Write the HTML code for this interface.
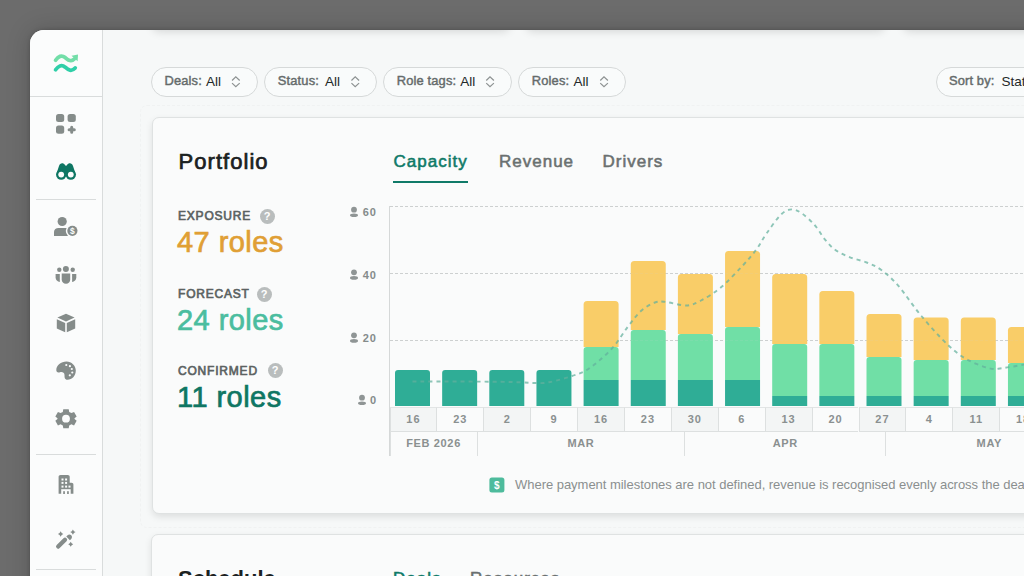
<!DOCTYPE html>
<html><head><meta charset="utf-8">
<style>
*{box-sizing:border-box;margin:0;padding:0}
html,body{width:1024px;height:576px;overflow:hidden;background:#6c6c6c;font-family:"Liberation Sans",sans-serif}
.abs{position:absolute}
#win{position:absolute;left:30px;top:30px;width:1100px;height:600px;background:#f6f8f8;border-top-left-radius:14px;overflow:hidden;box-shadow:0 0 4px rgba(0,0,0,.2),0 0 24px rgba(0,0,0,.18)}
#side{position:absolute;left:0;top:0;width:73px;height:600px;background:#fbfcfc;border-right:1px solid #d9dcdc}
.pill{position:absolute;top:67px;height:30px;border:1px solid #d6d9d9;border-radius:15px;background:#f9fbfb}
.pl{position:absolute;top:73px;font-size:12.9px;-webkit-text-stroke:0.45px currentColor;color:#656b6b;letter-spacing:0.15px;white-space:nowrap;line-height:16px}
.pv{position:absolute;top:73.5px;font-size:13.5px;color:#232828;white-space:nowrap;line-height:16px}
.card{position:absolute;background:#fafbfb;border:1px solid #dfe2e2;border-radius:7px;box-shadow:0 3px 7px rgba(0,0,0,.1)}
.wk{position:absolute;top:407px;width:46.9px;height:25px;border-left:1px solid #dde0e0;border-top:1px solid #e2e5e5;border-bottom:1px solid #dde0e0;font-size:11px;font-weight:bold;color:#8a9090;text-align:center;line-height:22.5px;letter-spacing:1px}
.mo{position:absolute;top:432px;height:24px;border-left:1px solid #dde0e0;font-size:11px;font-weight:bold;color:#8a9090;text-align:center;line-height:22px;letter-spacing:0.65px}
.lab{position:absolute;left:178px;font-size:12px;-webkit-text-stroke:0.65px currentColor;letter-spacing:0.8px;color:#5b6262;line-height:14px}
.val{position:absolute;left:177px;font-size:29px;letter-spacing:0.45px;-webkit-text-stroke:0.7px currentColor;line-height:34px}
.q{position:absolute;width:15px;height:15px;border-radius:50%;background:#b9bdbd;color:#fff;font-size:11px;font-weight:bold;text-align:center;line-height:15px}
.yl{position:absolute;font-size:11px;font-weight:bold;color:#858b8b;letter-spacing:1px;text-align:right}
.tab{position:absolute;top:151.5px;font-size:17px;font-weight:normal;-webkit-text-stroke:0.55px currentColor;letter-spacing:1px;color:#6a7070;line-height:20px}
</style></head><body>
<div id="win">
 <div id="side">
  <div class="abs" style="left:0;top:66px;width:73px;height:1px;background:#d9dcdc"></div>
  <div class="abs" style="left:6px;top:169px;width:60px;height:1px;background:#d9dcdc"></div>
  <div class="abs" style="left:6px;top:424px;width:60px;height:1px;background:#d9dcdc"></div>
  <div class="abs" style="left:6px;top:539px;width:60px;height:1px;background:#d9dcdc"></div>
 </div>
</div>
<svg class="abs" style="left:0;top:0" width="1024" height="576" viewBox="0 0 1024 576">
 <path d="M55.6 60.2 C58.2 56.4, 61.5 54.6, 65.2 57.6 C68.4 60.6, 71.2 62.2, 74.3 59" fill="none" stroke="#72dea8" stroke-width="3.8" stroke-linecap="round"/>
 <path d="M71.5 55.8 L78 54.5 L77.6 61.2 Z" fill="#72dea8"/>
 <path d="M55.6 69.8 C58.2 66, 61.5 64.2, 65.2 67.2 C68.4 70.2, 71.5 72, 75.2 68" fill="none" stroke="#2fcfa8" stroke-width="3.8" stroke-linecap="round"/>
 <rect x="56" y="114" width="8.2" height="8" rx="2.5" fill="#858c8a"/>
 <rect x="67.6" y="114" width="8.2" height="8" rx="2.5" fill="#858c8a"/>
 <rect x="56" y="125.6" width="8.2" height="8.2" rx="2.5" fill="#858c8a"/>
 <path d="M71.7 127.2 V132.3 M69.1 129.7 H74.3" stroke="#858c8a" stroke-width="3" stroke-linecap="round"/>
 <path d="M57 172 L59 166 C60 162.5, 63.5 162.5, 65 165 L66 166 L67 165 C68.5 162.5, 72 162.5, 73 166 L75 172 Z" fill="#0e7663"/>
 <circle cx="61.2" cy="174.6" r="5.2" fill="#0e7663"/>
 <circle cx="70.8" cy="174.6" r="5.2" fill="#0e7663"/>
 <rect x="63" y="168" width="6" height="7" fill="#0e7663"/>
 <circle cx="61.2" cy="174.6" r="2.9" fill="#fbfcfc"/>
 <circle cx="70.8" cy="174.6" r="2.9" fill="#fbfcfc"/>
 <circle cx="62.2" cy="221.5" r="4.6" fill="#858c8a"/>
 <path d="M54 236 V232 C54 229.5, 56 228, 58.5 228 H67.5 L68 236 Z" fill="#858c8a"/>
 <circle cx="72.4" cy="230.8" r="6.6" fill="#fbfcfc"/>
 <circle cx="72.4" cy="230.8" r="5.1" fill="#858c8a"/>
 <text x="72.4" y="234.3" font-size="8.5" font-weight="bold" fill="#fbfcfc" text-anchor="middle" font-family="Liberation Sans">$</text>
 <circle cx="65.9" cy="269" r="3" fill="#858c8a"/>
 <circle cx="59.3" cy="269.8" r="2.2" fill="#858c8a"/>
 <circle cx="72.7" cy="269.8" r="2.2" fill="#858c8a"/>
 <path d="M61.7 273.4 H70.2 V279.5 C70.2 282, 68.5 283.7, 66 283.7 C63.5 283.7, 61.7 282, 61.7 279.5 Z" fill="#858c8a"/>
 <path d="M55.6 274 H59.8 V282 C57.5 281.5, 55.6 280, 55.6 277.5 Z" fill="#858c8a"/>
 <path d="M76.3 274 H72.1 V282 C74.4 281.5, 76.3 280, 76.3 277.5 Z" fill="#858c8a"/>
 <path d="M66 313.8 L74.6 317.6 L66 321.4 L57.4 317.6 Z" fill="#858c8a"/>
 <path d="M56.8 319.3 L65.2 323 V332.2 L56.8 328.4 Z" fill="#858c8a"/>
 <path d="M75.2 319.3 L66.8 323 V332.2 L75.2 328.4 Z" fill="#858c8a"/>
 <path d="M66.5 361.4 C71.5 361.4, 75.8 365.5, 75.8 370.5 C75.8 376, 72 379.8, 67.5 379.8 C64.5 379.8, 64.5 377, 64.5 375 C64.5 372.5, 62 371.7, 60 372.3 C57.5 373, 56.3 372, 56.3 370 C56.3 365, 61 361.4, 66.5 361.4 Z" fill="#858c8a"/>
 <circle cx="66.3" cy="365" r="1.1" fill="#fbfcfc"/>
 <circle cx="69.9" cy="366.2" r="1.1" fill="#fbfcfc"/>
 <circle cx="71.8" cy="369" r="1.1" fill="#fbfcfc"/>
 <circle cx="72.3" cy="372.5" r="1.1" fill="#fbfcfc"/>
 <circle cx="69.8" cy="375.3" r="1.1" fill="#fbfcfc"/>
 <g transform="translate(66 418.7)">
  <path d="M-2.8 -9.8 H2.8 L3.3 -7 L5.6 -5.8 L8.3 -6.9 L11 -2.2 L8.8 -0.4 V0.4 L11 2.2 L8.3 6.9 L5.6 5.8 L3.3 7 L2.8 9.8 H-2.8 L-3.3 7 L-5.6 5.8 L-8.3 6.9 L-11 2.2 L-8.8 0.4 V-0.4 L-11 -2.2 L-8.3 -6.9 L-5.6 -5.8 L-3.3 -7 Z" fill="#858c8a" transform="scale(0.97)"/>
  <circle r="3.9" fill="#fbfcfc"/>
 </g>
 <path d="M58.6 477 C58.6 475.8, 59.4 475.1, 60.6 475.1 H67.7 C68.9 475.1, 69.7 475.8, 69.7 477 V482.7 H71.5 C72.7 482.7, 73.4 483.4, 73.4 484.6 V493.8 H58.6 Z" fill="#858c8a"/>
 <g fill="#fbfcfc">
  <rect x="61.5" y="478.5" width="2" height="2"/><rect x="65.1" y="478.5" width="2" height="2"/>
  <rect x="61.5" y="481.9" width="2" height="2"/><rect x="65.1" y="481.9" width="2" height="2"/>
  <rect x="61.5" y="485.6" width="2" height="2"/><rect x="65.1" y="485.6" width="2" height="2"/><rect x="68.5" y="485.6" width="2" height="2"/>
  <rect x="61.2" y="489.2" width="9.5" height="4.8"/>
 </g>
 <rect x="63.2" y="491.2" width="1.7" height="2.8" fill="#858c8a"/><rect x="67.1" y="491.2" width="1.7" height="2.8" fill="#858c8a"/>
 <path d="M58.2 546.6 L65 539.8" stroke="#858c8a" stroke-width="4.3" stroke-linecap="round"/>
 <path d="M66.3 536.6 L67.6 535.3 C68.6 534.3, 70.2 534.3, 71.2 535.3 C72.2 536.3, 72.2 537.9, 71.2 538.9 L69.9 540.2 Z" fill="#858c8a"/>
 <path d="M60.65 531.3 Q61.406 533.244 63.35 534 Q61.406 534.756 60.65 536.7 Q59.894 534.756 57.949999999999996 534 Q59.894 533.244 60.65 531.3 Z" fill="#858c8a"/>
 <path d="M72.9 529.4 Q73.656 531.344 75.60000000000001 532.1 Q73.656 532.856 72.9 534.8000000000001 Q72.144 532.856 70.2 532.1 Q72.144 531.344 72.9 529.4 Z" fill="#858c8a"/>
 <path d="M70.7 541.7 Q71.4 543.5 73.2 544.2 Q71.4 544.9000000000001 70.7 546.7 Q70.0 544.9000000000001 68.2 544.2 Q70.0 543.5 70.7 541.7 Z" fill="#858c8a"/>
</svg>

<div class="pill" style="left:151px;width:106.5px"></div><div class="pl" style="left:164.5px">Deals:</div><div class="pv" style="left:206px">All</div>
<div class="pill" style="left:264px;width:112.5px"></div><div class="pl" style="left:277.8px">Status:</div><div class="pv" style="left:325px">All</div>
<div class="pill" style="left:383px;width:128.5px"></div><div class="pl" style="left:396.7px">Role tags:</div><div class="pv" style="left:460.3px">All</div>
<div class="pill" style="left:518px;width:107.5px"></div><div class="pl" style="left:531.8px">Roles:</div><div class="pv" style="left:573.6px">All</div>
<div class="pill" style="left:935.5px;width:200px"></div><div class="pl" style="left:948.9px">Sort by:</div><div class="pv" style="left:1001.5px">Status</div>
<svg class="abs" style="left:0;top:0" width="1024" height="110" viewBox="0 0 1024 110">
<path d="M232.05 80.5 L235.80 76.9 L239.70 80.5 M232.05 83.1 L235.80 86.7 L239.70 83.1" fill="none" stroke="#8d9292" stroke-width="1.2"/>
<path d="M351.45 80.5 L355.20 76.9 L359.10 80.5 M351.45 83.1 L355.20 86.7 L359.10 83.1" fill="none" stroke="#8d9292" stroke-width="1.2"/>
<path d="M486.25 80.5 L490.00 76.9 L493.90 80.5 M486.25 83.1 L490.00 86.7 L493.90 83.1" fill="none" stroke="#8d9292" stroke-width="1.2"/>
<path d="M600.25 80.5 L604.00 76.9 L607.90 80.5 M600.25 83.1 L604.00 86.7 L607.90 83.1" fill="none" stroke="#8d9292" stroke-width="1.2"/>
</svg>

<div class="abs" style="left:139.5px;top:104.5px;width:1000px;height:423px;border:1px dashed #f0f2f2;border-radius:7px"></div>
<div class="abs" style="left:103px;top:30px;width:921px;height:30px;overflow:hidden">
<div class="card" style="left:49px;top:-70px;width:358px;height:70px;box-shadow:0 2px 8px rgba(0,0,0,.13)"></div>
<div class="card" style="left:423px;top:-70px;width:359px;height:70px;box-shadow:0 2px 8px rgba(0,0,0,.13)"></div>
<div class="card" style="left:800px;top:-70px;width:359px;height:70px;box-shadow:0 2px 8px rgba(0,0,0,.13)"></div>
</div>
<div class="card" style="left:152px;top:117px;width:1000px;height:397px"></div>
<div class="abs" style="left:178.5px;top:150px;font-size:22px;-webkit-text-stroke:0.7px currentColor;color:#1b2121;letter-spacing:1.05px;line-height:24px">Portfolio</div>
<div class="tab" style="left:393.5px;color:#0f7a68">Capacity</div>
<div class="abs" style="left:393px;top:181px;width:75px;height:2px;background:#0f7a68"></div>
<div class="tab" style="left:499px">Revenue</div>
<div class="tab" style="left:602.5px">Drivers</div>

<div class="lab" style="top:209px">EXPOSURE</div><div class="q" style="left:259.7px;top:208.5px">?</div>
<div class="val" style="top:224.5px;color:#e09f35">47 roles</div>
<div class="lab" style="top:287px">FORECAST</div><div class="q" style="left:256.5px;top:286.7px">?</div>
<div class="val" style="top:303px;color:#4bbd9f">24 roles</div>
<div class="lab" style="top:364px">CONFIRMED</div><div class="q" style="left:267.7px;top:363.4px">?</div>
<div class="val" style="top:379.5px;color:#0f7663">11 roles</div>

<div class="yl" style="left:360px;top:206.2px;width:17px">60</div>
<div class="yl" style="left:360px;top:269px;width:17px">40</div>
<div class="yl" style="left:360px;top:332.2px;width:17px">20</div>
<div class="yl" style="left:360px;top:394px;width:17px">0</div>

<div class="wk" style="left:389.5px;background:#f3f5f5">16</div>
<div class="wk" style="left:436.4px;background:#fafbfb">23</div>
<div class="wk" style="left:483.3px;background:#f3f5f5">2</div>
<div class="wk" style="left:530.2px;background:#fafbfb">9</div>
<div class="wk" style="left:577.1px;background:#f3f5f5">16</div>
<div class="wk" style="left:624.0px;background:#fafbfb">23</div>
<div class="wk" style="left:670.9px;background:#f3f5f5">30</div>
<div class="wk" style="left:717.8px;background:#fafbfb">6</div>
<div class="wk" style="left:764.7px;background:#f3f5f5">13</div>
<div class="wk" style="left:811.6px;background:#fafbfb">20</div>
<div class="wk" style="left:858.5px;background:#f3f5f5">27</div>
<div class="wk" style="left:905.4px;background:#fafbfb">4</div>
<div class="wk" style="left:952.3px;background:#f3f5f5">11</div>
<div class="wk" style="left:999.2px;background:#fafbfb">18</div>
<div class="mo" style="left:389.5px;width:87.1px">FEB 2026</div>
<div class="mo" style="left:476.6px;width:207.7px">MAR</div>
<div class="mo" style="left:684.3px;width:201.0px">APR</div>
<div class="mo" style="left:885.3px;width:207.0px">MAY</div>

<svg class="abs" style="left:0;top:0" width="1024" height="576" viewBox="0 0 1024 576">
 <line x1="389.5" y1="206" x2="389.5" y2="456" stroke="#d5d8d8" stroke-width="1"/>
 <line x1="390" y1="206.5" x2="1024" y2="206.5" stroke="#cdd0d0" stroke-width="1" stroke-dasharray="3 2"/>
<line x1="390" y1="273.5" x2="1024" y2="273.5" stroke="#cdd0d0" stroke-width="1" stroke-dasharray="3 2"/>
<line x1="390" y1="340.5" x2="1024" y2="340.5" stroke="#cdd0d0" stroke-width="1" stroke-dasharray="3 2"/>
 <g><path d="M395.00 406 V373.00 Q395.00 370.00 398.00 370.00 H427.00 Q430.00 370.00 430.00 373.00 V406 Z" fill="#2fad96"/>
<path d="M442.15 406 V373.00 Q442.15 370.00 445.15 370.00 H474.15 Q477.15 370.00 477.15 373.00 V406 Z" fill="#2fad96"/>
<path d="M489.30 406 V373.00 Q489.30 370.00 492.30 370.00 H521.30 Q524.30 370.00 524.30 373.00 V406 Z" fill="#2fad96"/>
<path d="M536.45 406 V373.00 Q536.45 370.00 539.45 370.00 H568.45 Q571.45 370.00 571.45 373.00 V406 Z" fill="#2fad96"/>
<path d="M583.60 347 V304.50 Q583.60 301.00 587.10 301.00 H615.10 Q618.60 301.00 618.60 304.50 V347 Z" fill="#f9cd68"/>
<path d="M583.60 380 V350.00 Q583.60 347.00 586.60 347.00 H615.60 Q618.60 347.00 618.60 350.00 V380 Z" fill="#70dfa6"/>
<rect x="583.60" y="380" width="35" height="26.00" fill="#2fad96"/>
<path d="M630.75 330 V264.50 Q630.75 261.00 634.25 261.00 H662.25 Q665.75 261.00 665.75 264.50 V330 Z" fill="#f9cd68"/>
<path d="M630.75 380 V333.00 Q630.75 330.00 633.75 330.00 H662.75 Q665.75 330.00 665.75 333.00 V380 Z" fill="#70dfa6"/>
<rect x="630.75" y="380" width="35" height="26.00" fill="#2fad96"/>
<path d="M677.90 334 V277.50 Q677.90 274.00 681.40 274.00 H709.40 Q712.90 274.00 712.90 277.50 V334 Z" fill="#f9cd68"/>
<path d="M677.90 380 V337.00 Q677.90 334.00 680.90 334.00 H709.90 Q712.90 334.00 712.90 337.00 V380 Z" fill="#70dfa6"/>
<rect x="677.90" y="380" width="35" height="26.00" fill="#2fad96"/>
<path d="M725.05 327 V254.50 Q725.05 251.00 728.55 251.00 H756.55 Q760.05 251.00 760.05 254.50 V327 Z" fill="#f9cd68"/>
<path d="M725.05 380 V330.00 Q725.05 327.00 728.05 327.00 H757.05 Q760.05 327.00 760.05 330.00 V380 Z" fill="#70dfa6"/>
<rect x="725.05" y="380" width="35" height="26.00" fill="#2fad96"/>
<path d="M772.20 344 V277.50 Q772.20 274.00 775.70 274.00 H803.70 Q807.20 274.00 807.20 277.50 V344 Z" fill="#f9cd68"/>
<path d="M772.20 396 V347.00 Q772.20 344.00 775.20 344.00 H804.20 Q807.20 344.00 807.20 347.00 V396 Z" fill="#70dfa6"/>
<rect x="772.20" y="396" width="35" height="10.00" fill="#2fad96"/>
<path d="M819.35 344 V294.50 Q819.35 291.00 822.85 291.00 H850.85 Q854.35 291.00 854.35 294.50 V344 Z" fill="#f9cd68"/>
<path d="M819.35 396 V347.00 Q819.35 344.00 822.35 344.00 H851.35 Q854.35 344.00 854.35 347.00 V396 Z" fill="#70dfa6"/>
<rect x="819.35" y="396" width="35" height="10.00" fill="#2fad96"/>
<path d="M866.50 357 V317.50 Q866.50 314.00 870.00 314.00 H898.00 Q901.50 314.00 901.50 317.50 V357 Z" fill="#f9cd68"/>
<path d="M866.50 396 V360.00 Q866.50 357.00 869.50 357.00 H898.50 Q901.50 357.00 901.50 360.00 V396 Z" fill="#70dfa6"/>
<rect x="866.50" y="396" width="35" height="10.00" fill="#2fad96"/>
<path d="M913.65 360 V321.00 Q913.65 317.50 917.15 317.50 H945.15 Q948.65 317.50 948.65 321.00 V360 Z" fill="#f9cd68"/>
<path d="M913.65 396 V363.00 Q913.65 360.00 916.65 360.00 H945.65 Q948.65 360.00 948.65 363.00 V396 Z" fill="#70dfa6"/>
<rect x="913.65" y="396" width="35" height="10.00" fill="#2fad96"/>
<path d="M960.80 360 V321.00 Q960.80 317.50 964.30 317.50 H992.30 Q995.80 317.50 995.80 321.00 V360 Z" fill="#f9cd68"/>
<path d="M960.80 396 V363.00 Q960.80 360.00 963.80 360.00 H992.80 Q995.80 360.00 995.80 363.00 V396 Z" fill="#70dfa6"/>
<rect x="960.80" y="396" width="35" height="10.00" fill="#2fad96"/>
<path d="M1007.95 363 V330.50 Q1007.95 327.00 1011.45 327.00 H1039.45 Q1042.95 327.00 1042.95 330.50 V363 Z" fill="#f9cd68"/>
<path d="M1007.95 396 V366.00 Q1007.95 363.00 1010.95 363.00 H1039.95 Q1042.95 363.00 1042.95 366.00 V396 Z" fill="#70dfa6"/>
<rect x="1007.95" y="396" width="35" height="10.00" fill="#2fad96"/></g>
 <g opacity="0.12"><line x1="390" y1="206.5" x2="1024" y2="206.5" stroke="#cdd0d0" stroke-width="1" stroke-dasharray="3 2"/>
<line x1="390" y1="273.5" x2="1024" y2="273.5" stroke="#cdd0d0" stroke-width="1" stroke-dasharray="3 2"/>
<line x1="390" y1="340.5" x2="1024" y2="340.5" stroke="#cdd0d0" stroke-width="1" stroke-dasharray="3 2"/></g>
 <path d="M412.5 381.5 C420.4 381.5, 445.4 381.4, 460.0 381.5 C474.6 381.6, 490.0 381.7, 500.0 381.8 C510.0 381.9, 514.2 382.1, 520.0 382.3 C525.8 382.5, 529.8 383.0, 534.6 383.0 C539.4 383.0, 542.8 383.5, 549.0 382.3 C555.2 381.1, 565.3 378.3, 572.0 376.0 C578.7 373.7, 582.4 373.0, 589.0 368.5 C595.6 364.0, 605.2 355.8, 611.7 348.8 C618.2 341.8, 623.1 332.8, 628.0 326.5 C632.9 320.2, 636.5 315.0, 641.0 311.0 C645.5 307.0, 650.8 304.0, 655.0 302.5 C659.2 301.0, 660.7 301.5, 666.0 302.0 C671.3 302.5, 680.9 305.8, 686.7 305.5 C692.5 305.2, 695.3 303.5, 701.0 300.5 C706.7 297.5, 714.0 293.1, 720.8 287.5 C727.6 281.9, 735.8 272.9, 741.7 266.7 C747.6 260.4, 751.8 255.6, 756.0 250.0 C760.2 244.4, 762.5 239.2, 766.7 233.3 C770.9 227.4, 776.8 218.6, 781.0 214.6 C785.2 210.6, 788.2 209.6, 791.7 209.4 C795.2 209.2, 798.2 210.9, 802.0 213.5 C805.8 216.1, 810.8 220.7, 814.6 225.0 C818.4 229.3, 821.5 235.4, 825.0 239.6 C828.5 243.8, 831.2 247.1, 835.4 250.0 C839.6 252.9, 844.8 255.2, 850.0 257.3 C855.2 259.4, 861.5 260.4, 866.7 262.5 C871.9 264.6, 875.8 266.0, 881.0 269.8 C886.2 273.6, 891.3 277.7, 898.0 285.4 C904.7 293.1, 913.1 306.1, 921.4 316.0 C929.7 325.9, 940.3 337.7, 948.0 345.0 C955.7 352.3, 960.7 355.9, 967.6 359.8 C974.5 363.7, 983.8 366.9, 989.5 368.3 C995.2 369.7, 995.9 368.9, 1001.6 368.3 C1007.4 367.7, 1017.6 365.7, 1024.0 364.6 C1030.4 363.6, 1037.3 362.4, 1040.0 362.0" fill="none" stroke="#62b09c" stroke-opacity="0.72" stroke-width="1.9" stroke-dasharray="4 4"/>
 <g fill="#8f9595">
  <circle cx="354" cy="209.7" r="2.9"/><ellipse cx="354" cy="215.3" rx="4" ry="1.8"/>
  <circle cx="354" cy="272.3" r="2.9"/><ellipse cx="354" cy="277.9" rx="4" ry="1.8"/>
  <circle cx="354" cy="335.3" r="2.9"/><ellipse cx="354" cy="340.9" rx="4" ry="1.8"/>
  <circle cx="362" cy="397.7" r="2.9"/><ellipse cx="362" cy="403.3" rx="4" ry="1.8"/>
 </g>
 <rect x="489.4" y="477.4" width="15" height="15" rx="2.5" fill="#4dbb9c"/>
 <text x="496.9" y="488.6" font-size="10" font-weight="bold" fill="#fff" text-anchor="middle" font-family="Liberation Sans">$</text>
</svg>
<div class="abs" style="left:515px;top:477px;font-size:13px;letter-spacing:-0.03px;color:#8a8f8f;white-space:nowrap;line-height:16px">Where payment milestones are not defined, revenue is recognised evenly across the deal</div>

<div class="card" style="left:151px;top:534px;width:1000px;height:200px"></div>
<div class="abs" style="left:178px;top:567px;font-size:22px;font-weight:bold;color:#1b2121;line-height:24px">Schedule</div>
<div class="tab" style="left:393px;top:568.5px;color:#0f7a68">Deals</div>
<div class="tab" style="left:470px;top:568.5px">Resources</div>
</body></html>
